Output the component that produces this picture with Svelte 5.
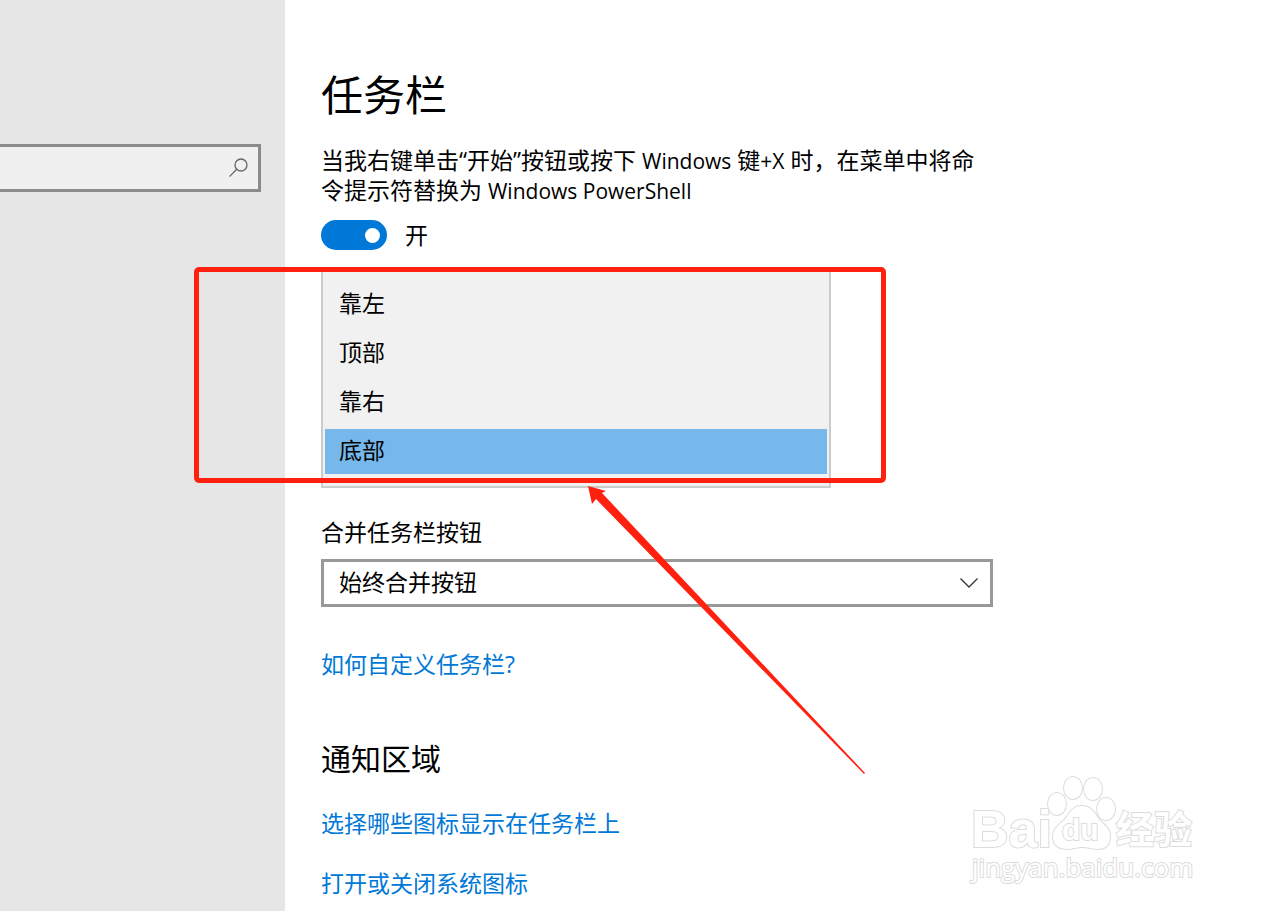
<script>
  // Taskbar settings page with the location list open and a callout drawn over it.
  let replacePrompt = $state(true);
  let position = $state('底部');
  let combine = $state('始终合并按钮');
  let query = $state('');

  const positions = ['靠左', '顶部', '靠右', '底部'];
  const combineModes = ['始终合并按钮', '任务栏已满时', '从不'];
  const links = ['选择哪些图标显示在任务栏上', '打开或关闭系统图标'];
</script>

<div class="page">
  <aside class="sidebar">
    <label class="search">
      <input type="search" aria-label="查找设置" bind:value={query} />
      <svg width="20" height="20" viewBox="0 0 20 20" aria-hidden="true">
        <circle cx="13" cy="7" r="6" />
        <path d="M8.7 11.3 1.5 18.6" />
      </svg>
    </label>
  </aside>

  <main class="content">
    <h1>任务栏</h1>

    <p class="description" id="prompt-text">
      当我右键单击“开始”按钮或按下 <span class="latin">Windows</span> 键<span class="latin">+X</span> 时，在菜单中将命令提示符替换为 <span class="latin">Windows PowerShell</span>
    </p>
    <label class="toggle">
      <input type="checkbox" role="switch" aria-describedby="prompt-text" bind:checked={replacePrompt} />
      <span>{replacePrompt ? '开' : '关'}</span>
    </label>

    <div class="listbox" role="listbox" aria-label="任务栏在屏幕上的位置">
      {#each positions as item}
        <button
          type="button"
          role="option"
          aria-selected={position === item}
          class:selected={position === item}
          onclick={() => (position = item)}>{item}</button>
      {/each}
    </div>

    <label class="field-label" for="combine">合并任务栏按钮</label>
    <div class="select">
      <select id="combine" bind:value={combine}>
        {#each combineModes as mode}
          <option>{mode}</option>
        {/each}
      </select>
      <svg width="18" height="10" viewBox="0 0 18 10" aria-hidden="true">
        <path d="M.5.5 9 9 17.5.5" />
      </svg>
    </div>

    <a class="help" href="#customize">如何自定义任务栏?</a>

    <h2>通知区域</h2>
    <nav class="links">
      {#each links as link}
        <a href="#notification">{link}</a>
      {/each}
    </nav>
  </main>

  <div class="callout"></div>
  <svg class="arrow" width="280" height="290" viewBox="0 0 280 290" aria-hidden="true">
    <path d="M1 0 19 5 15 7 278 287 277 288 9 13 5 18Z" />
  </svg>

  <svg class="watermark" width="240" height="120" viewBox="0 0 240 120" aria-hidden="true">
    <text class="brand" x="2" y="72">Bai</text>
    <ellipse cx="88" cy="29" rx="9" ry="11" />
    <ellipse cx="104" cy="13" rx="9" ry="11" />
    <ellipse cx="124" cy="14" rx="9" ry="11" />
    <ellipse cx="137" cy="34" rx="9" ry="11" />
    <path d="M113 31c-9 0-12 6-16 12-5 6-13 9-13 19 0 8 6 12 14 12 6 0 9-2 15-2s10 2 16 2c9 0 12-6 12-13 0-9-8-12-12-18-4-6-7-12-16-12Z" />
    <text class="du" x="93" y="65">du</text>
    <text class="cjk" x="147" y="68">经验</text>
    <text class="domain" x="3" y="102">jingyan.baidu.com</text>
  </svg>
</div>

<style>
  :global(body) {
    margin: 0;
    background: #fff;
  }

  .page {
    position: relative;
    display: flex;
    min-height: 100vh;
    overflow: hidden;
    color: #000;
    font: 23px/30px 'Open Sans', 'Noto Sans CJK SC', sans-serif;
  }

  button,
  input,
  select {
    margin: 0;
    color: inherit;
    font: inherit;
  }

  .sidebar {
    flex: none;
    box-sizing: border-box;
    width: 285px;
    padding: 144px 24px 0 0;
    background: #e6e6e6;
  }

  .search {
    display: flex;
    align-items: center;
    box-sizing: border-box;
    height: 48px;
    padding-right: 10px;
    border: 3px solid #8b8b8b;
    border-left: 0;
    background: #f0f0f0;
  }

  .search input {
    flex: 1;
    min-width: 0;
    border: 0;
    outline: 0;
    background: none;
  }

  .search svg,
  .select svg {
    fill: none;
    stroke: #666;
    stroke-width: 1.3;
  }

  .content {
    flex: 1;
    display: flex;
    flex-direction: column;
    align-items: flex-start;
    max-width: 672px;
    padding: 65px 36px 8px;
  }

  h1,
  h2,
  p {
    margin: 0;
    font-weight: 400;
  }

  h1 {
    font-size: 42px;
    line-height: 60px;
  }

  .description {
    margin-top: 20px;
  }

  .latin {
    font-size: 21px;
    line-height: 1;
  }

  .toggle {
    display: flex;
    align-items: center;
    gap: 18px;
    margin-top: 15px;
  }

  .toggle input {
    display: flex;
    align-items: center;
    box-sizing: border-box;
    width: 66px;
    height: 30px;
    padding: 0 7px;
    border-radius: 15px;
    background: #999;
    appearance: none;
  }

  .toggle input::before {
    width: 15px;
    height: 15px;
    border-radius: 50%;
    background: #fff;
    content: '';
  }

  .toggle input:checked {
    justify-content: flex-end;
    background: #0078d7;
  }

  .listbox {
    display: flex;
    flex-direction: column;
    gap: 4px;
    box-sizing: border-box;
    width: 510px;
    max-width: 100%;
    margin-top: 18px;
    padding: 12px 2px;
    border: 2px solid #ccc;
    background: #f1f1f1;
  }

  .listbox button {
    height: 45px;
    padding: 0 14px 3px;
    border: 0;
    background: none;
    text-align: left;
  }

  .listbox .selected {
    background: #76b7ec;
  }

  .field-label {
    margin-top: 29px;
  }

  .select {
    display: grid;
    align-items: center;
    width: 100%;
    margin-top: 12px;
  }

  .select select,
  .select svg {
    grid-area: 1 / 1;
  }

  .select select {
    height: 48px;
    padding: 0 40px 2px 15px;
    border: 3px solid #999;
    border-radius: 0;
    background: #fff;
    appearance: none;
  }

  .select svg {
    justify-self: end;
    margin-right: 15px;
    stroke: #333;
    pointer-events: none;
  }

  a {
    color: #0078d7;
    text-decoration: none;
  }

  .help {
    margin-top: 42px;
  }

  h2 {
    margin-top: 60px;
    font-size: 30px;
    line-height: 40px;
  }

  .links {
    display: flex;
    flex-direction: column;
    gap: 30px;
    margin-top: 29px;
  }

  .callout,
  .arrow,
  .watermark {
    position: absolute;
    pointer-events: none;
  }

  .callout {
    top: 267px;
    left: 194px;
    box-sizing: border-box;
    width: 692px;
    height: 216px;
    border: 5px solid #ff2010;
    border-radius: 5px;
  }

  .arrow {
    top: 486px;
    left: 587px;
    fill: #ff2010;
  }

  .watermark {
    right: 57px;
    bottom: 16px;
    fill: #fff;
    stroke: #dcdcdc;
    stroke-width: 2;
    paint-order: stroke;
  }

  .brand {
    font: 700 52px 'Liberation Sans', sans-serif;
  }

  .du {
    font: 700 30px 'Liberation Sans', sans-serif;
  }

  .cjk {
    font: 700 38px 'Noto Sans CJK SC', sans-serif;
  }

  .domain {
    font: 26px 'Open Sans', sans-serif;
  }
</style>
